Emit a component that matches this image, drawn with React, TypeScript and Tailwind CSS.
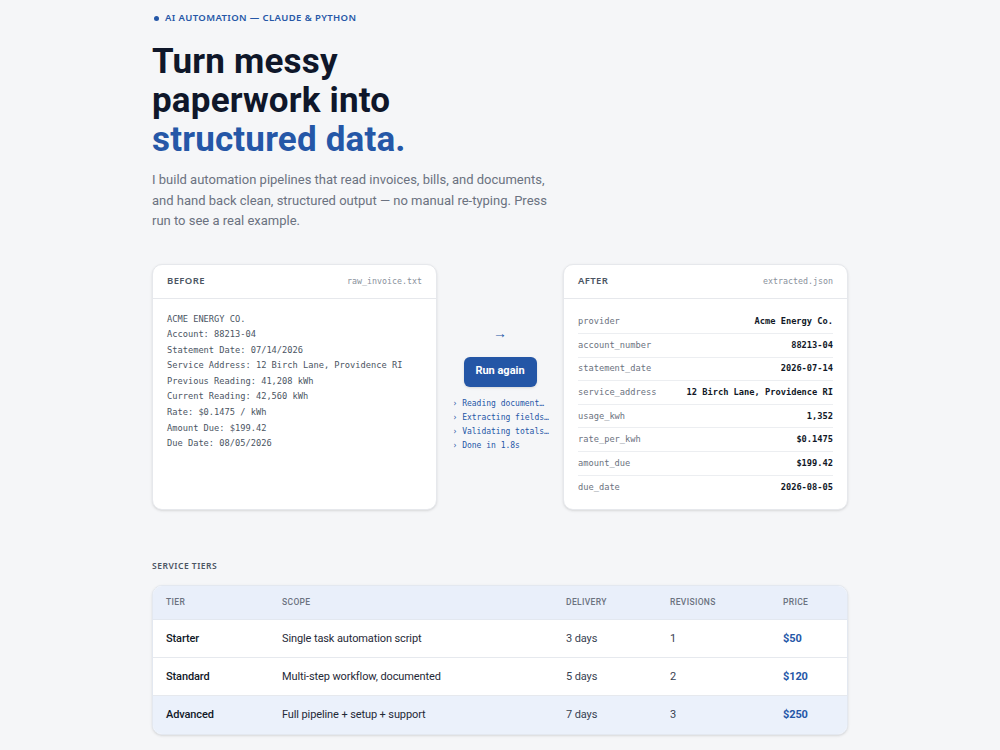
const sans = "font-['Noto_Sans','Segoe_UI',sans-serif]";
const body = "font-['Roboto','Segoe_UI',sans-serif]";
const mono = "font-['DejaVu_Sans_Mono','Liberation_Mono',monospace]";

const rawLines = [
  "ACME ENERGY CO.",
  "Account: 88213-04",
  "Statement Date: 07/14/2026",
  "Service Address: 12 Birch Lane, Providence RI",
  "Previous Reading: 41,208 kWh",
  "Current Reading: 42,560 kWh",
  "Rate: $0.1475 / kWh",
  "Amount Due: $199.42",
  "Due Date: 08/05/2026",
];

const fields: [string, string][] = [
  ["provider", "Acme Energy Co."],
  ["account_number", "88213-04"],
  ["statement_date", "2026-07-14"],
  ["service_address", "12 Birch Lane, Providence RI"],
  ["usage_kwh", "1,352"],
  ["rate_per_kwh", "$0.1475"],
  ["amount_due", "$199.42"],
  ["due_date", "2026-08-05"],
];

const steps = ["Reading document…", "Extracting fields…", "Validating totals…", "Done in 1.8s"];

const tiers = [
  { tier: "Starter", scope: "Single task automation script", delivery: "3 days", revisions: "1", price: "$50" },
  { tier: "Standard", scope: "Multi-step workflow, documented", delivery: "5 days", revisions: "2", price: "$120" },
  { tier: "Advanced", scope: "Full pipeline + setup + support", delivery: "7 days", revisions: "3", price: "$250", featured: true },
];

function CardHeader({ label, file }: { label: string; file: string }) {
  return (
    <div className="flex h-[34px] items-center justify-between border-b border-[#e6e8ec] px-[14px]">
      <span className="text-[9.5px] font-semibold tracking-[0.04em] text-[#4b5563]">{label}</span>
      <span className={`${mono} text-[8.3px] text-[#8a919c]`}>{file}</span>
    </div>
  );
}

export default function App() {
  return (
    <div className={`${sans} min-h-screen bg-[#f5f6f8] text-[#111827]`}>
      <div className="mx-auto w-[696px] pt-[11px] pb-[20px]">
        <div className="flex h-[14px] items-center gap-[6px] pl-[2px]">
          <span className="h-[5px] w-[5px] rounded-full bg-[#2557a7]" />
          <span className="text-[9.5px] font-semibold tracking-[0.04em] text-[#2557a7]">
            AI AUTOMATION — CLAUDE &amp; PYTHON
          </span>
        </div>

        <h1 className={`${body} mt-[17px] text-[35px] font-bold leading-[39px] tracking-[0.005em] text-[#0f172a]`}>
          Turn messy
          <br />
          paperwork into
          <br />
          <span className="text-[#2557a7]">structured data.</span>
        </h1>

        <p className={`${body} mt-[11px] w-[400px] text-[13px] leading-[20.5px] text-[#6b7280]`}>
          I build automation pipelines that read invoices, bills, and documents, and hand back clean, structured
          output — no manual re-typing. Press run to see a real example.
        </p>

        <div className="mt-[32px] grid h-[246px] grid-cols-[285px_1fr_285px]">
          <div className="flex flex-col rounded-[10px] border border-[#e6e8ec] bg-white shadow-sm">
            <CardHeader label="BEFORE" file="raw_invoice.txt" />
            <div className={`${mono} px-[14px] pt-[13px] text-[8.7px] leading-[15.6px] text-[#4b5563]`}>
              {rawLines.map((l) => (
                <div key={l} className="whitespace-pre">
                  {l}
                </div>
              ))}
            </div>
          </div>

          <div className="flex flex-col items-center justify-center pt-[5px]">
            <span className={`${sans} text-[14px] font-bold leading-[14px] text-[#2557a7]`}>→</span>
            <button className={`${body} mt-[17px] h-[30px] w-[73px] rounded-[6px] bg-[#2456a6] text-[11px] font-bold text-white shadow-sm`}>
              Run again
            </button>
            <div className={`${mono} mt-[10px] w-[95px] text-[8px] leading-[14px] text-[#2557a7]`}>
              {steps.map((s) => (
                <div key={s} className="whitespace-pre">
                  › {s}
                </div>
              ))}
            </div>
          </div>

          <div className="flex flex-col rounded-[10px] border border-[#e6e8ec] bg-white shadow-sm">
            <CardHeader label="AFTER" file="extracted.json" />
            <div className={`${mono} px-[14px] pt-[12px] text-[8.7px]`}>
              {fields.map(([k, v], i) => (
                <div
                  key={k}
                  className={`flex h-[23.6px] items-center justify-between ${
                    i < fields.length - 1 ? "border-b border-[#eceef1]" : ""
                  }`}
                >
                  <span className="text-[#6b7280]">{k}</span>
                  <span className="font-bold text-[#111827]">{v}</span>
                </div>
              ))}
            </div>
          </div>
        </div>

        <div className="mt-[50px] text-[8.5px] font-semibold tracking-[0.06em] text-[#4b5563]">SERVICE TIERS</div>

        <div className={`${body} mt-[13px] overflow-hidden rounded-[10px] border border-[#e3e8f0] bg-white shadow-sm`}>
          <div className="grid h-[34px] grid-cols-[116px_284px_104px_113px_1fr] items-center border-b border-[#e3e8f0] bg-[#e9effa] px-[13px] text-[8.5px] font-medium tracking-[0.04em] text-[#6b7280]">
            <span>TIER</span>
            <span>SCOPE</span>
            <span>DELIVERY</span>
            <span>REVISIONS</span>
            <span>PRICE</span>
          </div>
          {tiers.map((t, i) => (
            <div
              key={t.tier}
              className={`grid h-[38px] grid-cols-[116px_284px_104px_113px_1fr] items-center px-[13px] text-[11px] tracking-[-0.01em] ${
                i < tiers.length - 1 ? "border-b border-[#e6e9ee]" : ""
              } ${t.featured ? "bg-[#ebf1fb]" : "bg-white"}`}
            >
              <span className="font-medium text-[#111827]">{t.tier}</span>
              <span className="text-[#1f2937]">{t.scope}</span>
              <span className="text-[#374151]">{t.delivery}</span>
              <span className="text-[#374151]">{t.revisions}</span>
              <span className="font-bold text-[#2557a7]">{t.price}</span>
            </div>
          ))}
        </div>
      </div>
    </div>
  );
}
